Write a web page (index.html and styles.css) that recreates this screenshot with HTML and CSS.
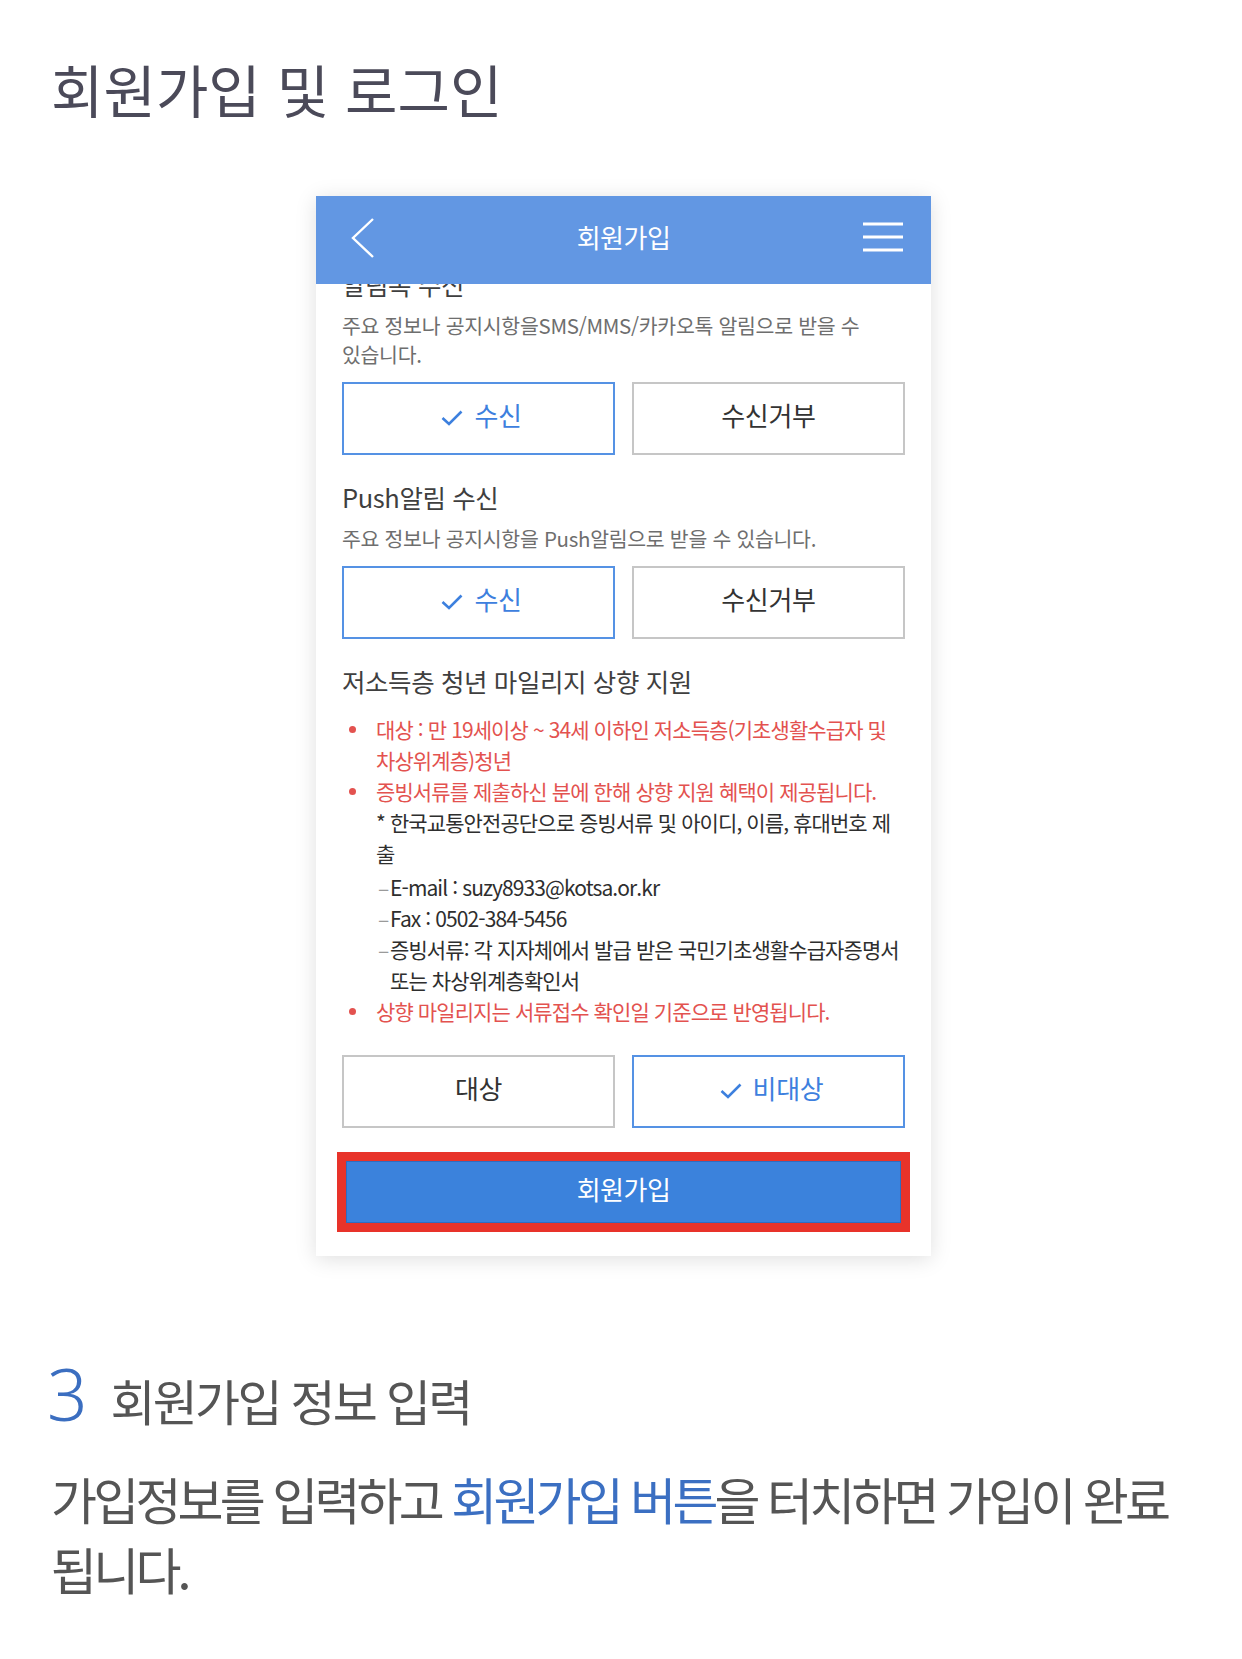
FILE: index.html
```html
<!DOCTYPE html>
<html lang="ko">
<head>
<meta charset="utf-8">
<title>회원가입 및 로그인</title>
<link rel="stylesheet" href="styles.css">
</head>
<body>
<h1 class="page-title">회원가입 및 로그인</h1>

<div class="phone">
  <header class="app-bar">
    <svg class="back" viewBox="0 0 24 44" width="24" height="44"><polyline points="22,1 2,20 22,39" fill="none" stroke="#fff" stroke-width="2.4"/></svg>
    <span class="app-title">회원가입</span>
    <svg class="menu" viewBox="0 0 40 36" width="40" height="36"><path d="M0 2h40M0 15h40M0 28h40" stroke="#fff" stroke-width="3"/></svg>
  </header>

  <div class="app-body">
    <section class="opt">
      <h2 class="opt-title">알림톡 수신</h2>
      <p class="opt-desc">주요 정보나 공지시항을SMS/MMS/카카오톡 알림으로 받을 수<br>있습니다.</p>
      <div class="choice">
        <div class="btn on"><svg class="check" viewBox="0 0 22 16" width="22" height="16"><polyline points="1.5,8 8,14 20.5,1.5" fill="none" stroke="currentColor" stroke-width="2.6"/></svg>수신</div>
        <div class="btn">수신거부</div>
      </div>
    </section>

    <section class="opt">
      <h2 class="opt-title">Push알림 수신</h2>
      <p class="opt-desc">주요 정보나 공지시항을 Push알림으로 받을 수 있습니다.</p>
      <div class="choice">
        <div class="btn on"><svg class="check" viewBox="0 0 22 16" width="22" height="16"><polyline points="1.5,8 8,14 20.5,1.5" fill="none" stroke="currentColor" stroke-width="2.6"/></svg>수신</div>
        <div class="btn">수신거부</div>
      </div>
    </section>

    <section class="opt">
      <h2 class="opt-title">저소득층 청년 마일리지 상향 지원</h2>
      <ul class="notes">
        <li class="note"><span class="red">대상 : 만 19세이상 ~ 34세 이하인 저소득층(기초생활수급자 및<br>차상위계층)청년</span></li>
        <li class="note"><span class="red">증빙서류를 제출하신 분에 한해 상향 지원 혜택이 제공됩니다.</span>
          <p class="sub">* 한국교통안전공단으로 증빙서류 및 아이디, 이름, 휴대번호 제<br>출</p>
          <ul class="dash">
            <li>E-mail : suzy8933@kotsa.or.kr</li>
            <li>Fax : 0502-384-5456</li>
            <li>증빙서류: 각 지자체에서 발급 받은 국민기초생활수급자증명서<br>또는 차상위계층확인서</li>
          </ul>
        </li>
        <li class="note"><span class="red">상향 마일리지는 서류접수 확인일 기준으로 반영됩니다.</span></li>
      </ul>
      <div class="choice choice-last">
        <div class="btn">대상</div>
        <div class="btn on"><svg class="check" viewBox="0 0 22 16" width="22" height="16"><polyline points="1.5,8 8,14 20.5,1.5" fill="none" stroke="currentColor" stroke-width="2.6"/></svg>비대상</div>
      </div>
    </section>

    <div class="submit-mark">
      <div class="submit">회원가입</div>
    </div>
  </div>
</div>

<div class="step">
  <span class="step-num">3</span>
  <span class="step-title">회원가입 정보 입력</span>
</div>
<p class="lead">가입정보를 입력하고 <span class="link">회원가입 버튼</span>을 터치하면 가입이 완료<br>됩니다.</p>
</body>
</html>
```

FILE: styles.css
```css
* { box-sizing: border-box; }
html, body { margin: 0; padding: 0; background: #fff; }
body {
  font-family: "Noto Sans CJK KR", "Noto Sans", sans-serif;
}

.page-title {
  margin: 56px 0 0 51px;
  font-size: 57px;
  line-height: 64px;
  font-weight: 400;
  color: #4b4a59;
}

.phone {
  position: relative;
  width: 615px;
  margin: 76px 0 0 316px;
  background: #fff;
  box-shadow: 0 3px 20px rgba(0, 0, 0, 0.13);
}

.app-bar {
  position: absolute;
  top: 0;
  left: 0;
  right: 0;
  height: 88px;
  background: #6297e3;
  display: grid;
  grid-template-columns: 1fr auto 1fr;
  align-items: center;
  padding: 0 28px;
  z-index: 1;
}
.back { display: block; margin-left: 7px; }
.app-title {
  margin-bottom: 8px;
  color: #fff;
  font-size: 26px;
  letter-spacing: -0.5px;
}
.menu { display: block; justify-self: end; }

.app-body { padding: 71px 26px 24px; }

.opt + .opt { margin-top: 25px; }
.opt-title {
  margin: 0;
  font-size: 25.5px;
  line-height: 34px;
  font-weight: 400;
  color: #3f3f3f;
  letter-spacing: -0.4px;
}
.opt-desc {
  margin: 10px 0 0;
  font-size: 20.5px;
  line-height: 29px;
  color: #6e6e6e;
  letter-spacing: -0.3px;
}

.choice {
  display: grid;
  grid-template-columns: 1fr 1fr;
  gap: 17px;
  margin-top: 13px;
}
.choice-last { margin-top: 28px; }
.btn {
  height: 73px;
  padding-bottom: 8px;
  border: 2px solid #c6c6c6;
  display: flex;
  align-items: center;
  justify-content: center;
  gap: 11px;
  font-size: 26px;
  color: #333;
  letter-spacing: -0.3px;
}
.btn.on { border-color: #5592e4; color: #3d80de; padding-left: 6px; }
.check { display: block; margin-top: 6px; }

.notes {
  list-style: none;
  margin: 16px 0 0;
  padding: 0;
  font-size: 21px;
  line-height: 31px;
  letter-spacing: -0.9px;
  white-space: nowrap;
  color: #2e2e2e;
}
.note { position: relative; padding-left: 34px; }
.note::before {
  content: "";
  position: absolute;
  left: 7px;
  top: 12px;
  width: 7px;
  height: 7px;
  border-radius: 50%;
  background: #e3524f;
}
.red { color: #e3524f; }
.sub { margin: 0; }
.dash { list-style: none; margin: 3px 0 0; padding: 0; }
.dash li { position: relative; padding-left: 14px; }
.dash li::before {
  content: "–";
  position: absolute;
  left: 2px;
  color: #9a9a9a;
}

.submit-mark {
  margin: 24px -5px 0 -5px;
  border: 9px solid #e8332a;
}
.submit {
  height: 62px;
  padding-bottom: 7px;
  background: #3b82dc;
  border: 1px solid #2f6cc0;
  color: #fff;
  display: flex;
  align-items: center;
  justify-content: center;
  font-size: 26px;
  letter-spacing: -0.5px;
}

.step {
  display: flex;
  align-items: baseline;
  margin: 98px 0 0 47px;
  line-height: 80px;
}
.step-num {
  font-family: "Noto Sans", sans-serif;
  font-size: 71px;
  font-weight: 300;
  color: #3b6ec0;
}
.step-title {
  margin-left: 23px;
  font-size: 49px;
  letter-spacing: -2.8px;
  color: #555;
}

.lead {
  margin: 23px 51px 0 51px;
  font-size: 50px;
  line-height: 70px;
  letter-spacing: -3.8px;
  word-break: keep-all;
  color: #555;
}
.link { color: #3b6fc2; }
```
